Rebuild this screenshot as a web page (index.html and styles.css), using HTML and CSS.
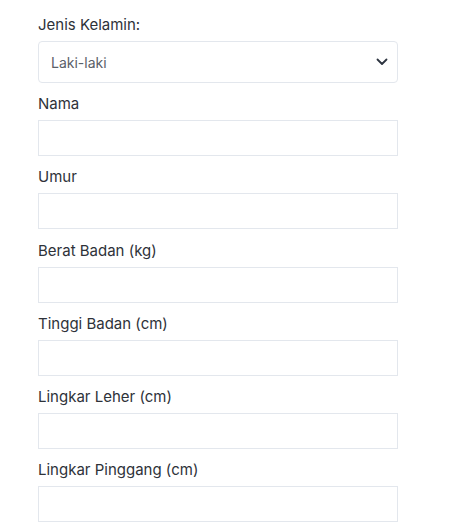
FILE: index.html
```html
<!DOCTYPE html>
<html lang="id">
<head>
    <meta charset="UTF-8">
    <meta name="viewport" content="width=device-width, initial-scale=1.0">
    <title>Form Data Tubuh</title>
    <link rel="stylesheet" href="styles.css">
</head>
<body>
    <form class="body-form">
        <div class="field">
            <label for="gender">Jenis Kelamin:</label>
            <div class="select-wrap">
                <select id="gender">
                    <option value="L">Laki-laki</option>
                    <option value="P">Perempuan</option>
                </select>
                <svg class="chevron" width="12" height="8" viewBox="0 0 12 8">
                    <path d="M1.5 1.5 L6 6 L10.5 1.5" fill="none" stroke="#2d3440" stroke-width="1.8" stroke-linecap="round" stroke-linejoin="round"/>
                </svg>
            </div>
        </div>
        <div class="field">
            <label for="nama">Nama</label>
            <input type="text" id="nama">
        </div>
        <div class="field">
            <label for="umur">Umur</label>
            <input type="number" id="umur">
        </div>
        <div class="field">
            <label for="berat">Berat Badan (kg)</label>
            <input type="number" id="berat">
        </div>
        <div class="field">
            <label for="tinggi">Tinggi Badan (cm)</label>
            <input type="number" id="tinggi">
        </div>
        <div class="field">
            <label for="leher">Lingkar Leher (cm)</label>
            <input type="number" id="leher">
        </div>
        <div class="field">
            <label for="pinggang">Lingkar Pinggang (cm)</label>
            <input type="number" id="pinggang">
        </div>
    </form>
</body>
</html>
```

FILE: styles.css
```css
body {
    margin: 0;
    background-color: #fff;
    font-family: "Inter", "Open Sans", sans-serif;
    color: #2b2f36;
}

.body-form {
    display: flex;
    flex-direction: column;
    gap: 10.2px;
    width: 360px;
    padding: 14px 0 0 38px;
}

.field {
    display: flex;
    flex-direction: column;
    gap: 6px;
}

label {
    font-size: 15px;
    line-height: 21px;
    color: #2e3239;
}

.select-wrap {
    position: relative;
}

select {
    box-sizing: border-box;
    width: 100%;
    height: 42px;
    padding: 0 12px;
    font-family: inherit;
    font-size: 14px;
    color: #5a6068;
    background-color: #fff;
    border: 1px solid #e3e7ed;
    border-radius: 4px;
    appearance: none;
    outline: none;
}

.chevron {
    position: absolute;
    right: 10px;
    top: 17px;
    pointer-events: none;
}

input {
    box-sizing: border-box;
    width: 100%;
    height: 36px;
    margin: 0;
    padding: 0 12px;
    border: 1px solid #e3e7ed;
    border-radius: 0;
    outline: none;
    appearance: none;
}
```
